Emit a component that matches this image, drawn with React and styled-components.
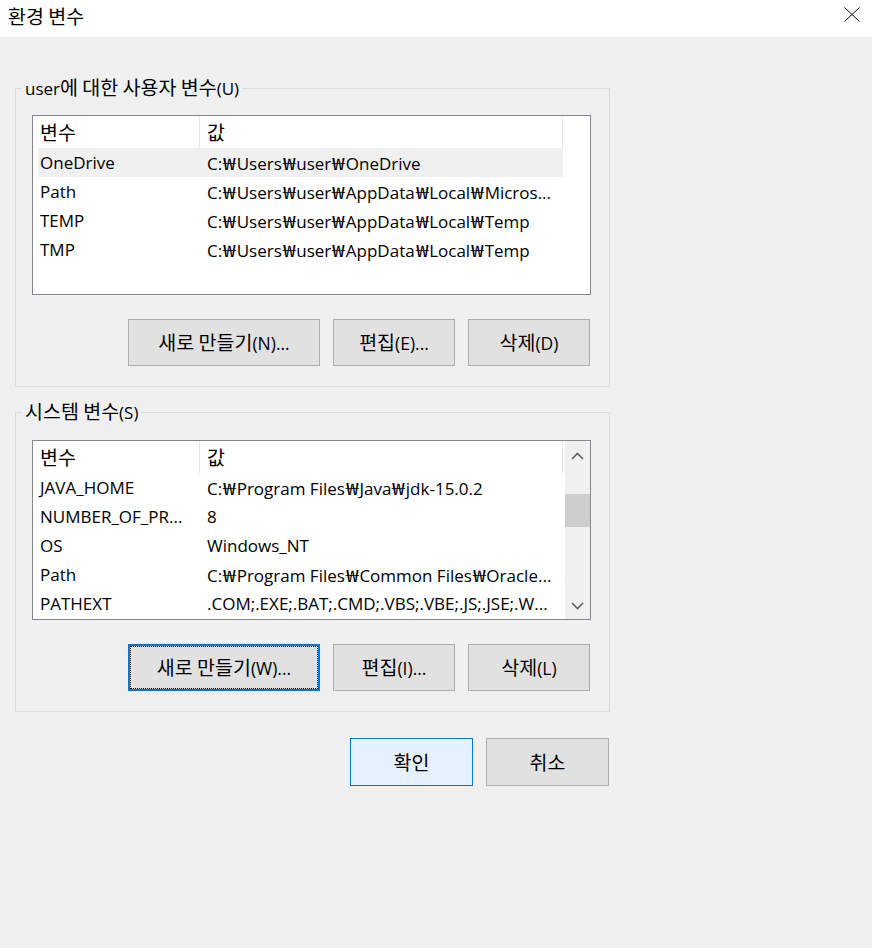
import styled, { createGlobalStyle, css } from "styled-components";

const GlobalStyle = createGlobalStyle`
  html, body {
    margin: 0;
    padding: 0;
  }
  body {
    background: #f0f0f0;
    font-family: "Open Sans", "Noto Sans CJK KR", sans-serif;
    font-size: 17px;
    color: #000;
  }
`;

const Window = styled.div`
  width: 872px;
  min-height: 948px;
  background: #f0f0f0;
  display: flex;
  flex-direction: column;
`;

const TitleBar = styled.div`
  height: 37px;
  background: #fff;
  display: flex;
  align-items: flex-start;
  justify-content: space-between;
`;

const Title = styled.div`
  padding: 6px 0 0 8px;
  height: 20px;
  line-height: 20px;
`;

const CloseButton = styled.div`
  width: 40px;
  height: 28px;
  display: flex;
  align-items: center;
  justify-content: center;
`;

// hangul runs are set a little larger, like Malgun Gothic next to Segoe
const Ko = styled.span`
  font-family: "Noto Sans CJK KR", sans-serif;
  font-size: 19.5px;
  line-height: 1;
`;

const Won = styled.span`
  display: inline-block;
  width: 14.5px;
  text-align: center;
  transform: scaleX(1.35);
`;

const Body = styled.div`
  padding: 40px 0 0 15px;
  display: flex;
  flex-direction: column;
`;

const Group = styled.fieldset`
  margin: ${(p) => p.$top}px 0 0;
  padding: ${(p) => p.$padTop}px 18px 20px 16px;
  border: 1px solid #dcdcdc;
  width: 595px;
  box-sizing: border-box;
  min-width: 0;
`;

const Legend = styled.legend`
  margin-left: -10px;
  padding: 0 3px;
  height: 22px;
  line-height: 22px;
  font-size: 17px;
  white-space: nowrap;
`;

const ListBox = styled.div`
  height: 180px;
  box-sizing: border-box;
  border: 1px solid #828790;
  background: #fff;
  display: flex;
  overflow: hidden;
`;

const ListMain = styled.div`
  width: 530px;
  flex: none;
  display: flex;
  flex-direction: column;
`;

const Header = styled.div`
  display: grid;
  grid-template-columns: 167px 1fr;
  height: 32px;
  flex: none;
`;

const HeaderCell = styled.div`
  padding-left: 7px;
  border-right: 1px solid #e5e5e5;
  display: flex;
  align-items: center;
`;

const Row = styled.div`
  margin-left: 5px;
  height: 29px;
  flex: none;
  display: grid;
  grid-template-columns: 161px 1fr;
  align-items: center;
  background: ${(p) => (p.$selected ? "#f0f0f0" : "transparent")};
`;

const Cell = styled.div`
  padding-left: ${(p) => (p.$first ? 2 : 8)}px;
  white-space: nowrap;
  overflow: hidden;
`;

const ScrollBar = styled.div`
  width: 25px;
  margin-left: 2px;
  background: #f0f0f0;
  display: flex;
  flex-direction: column;
`;

const ArrowButton = styled.div`
  height: ${(p) => p.$h}px;
  flex: none;
  display: flex;
  align-items: center;
  justify-content: center;
`;

const Track = styled.div`
  flex: 1;
  padding-top: 23px;
`;

const Thumb = styled.div`
  height: 33px;
  background: #cdcdcd;
`;

const ButtonRow = styled.div`
  display: flex;
  justify-content: flex-end;
  gap: 13px;
  margin-top: ${(p) => p.$top}px;
  padding-right: 1px;
  width: ${(p) => (p.$w ? `${p.$w}px` : "auto")};
  box-sizing: border-box;
`;

const Button = styled.button`
  width: ${(p) => p.$w}px;
  height: ${(p) => p.$h || 47}px;
  padding: 0;
  font: inherit;
  font-size: 17.5px;
  line-height: 20px;
  color: #000;
  background: #e1e1e1;
  border: 1px solid #adadad;
  box-sizing: border-box;
  ${(p) =>
    p.$focused &&
    css`
      border: 2px solid #0078d7;
      outline: 1px dotted #000;
      outline-offset: -3px;
    `}
  ${(p) =>
    p.$default &&
    css`
      background: #e5f1fb;
      border-color: #0078d7;
    `}
`;

function T({ children }) {
  const parts = String(children).split(/([가-힣]+(?: [가-힣]+)*|₩)/);
  return parts.map((part, i) => {
    if (!part) return null;
    if (part === "₩") return <Won key={i}>₩</Won>;
    if (/[가-힣]/.test(part)) return <Ko key={i}>{part}</Ko>;
    return part;
  });
}

const userVars = [
  ["OneDrive", "C:₩Users₩user₩OneDrive"],
  ["Path", "C:₩Users₩user₩AppData₩Local₩Micros..."],
  ["TEMP", "C:₩Users₩user₩AppData₩Local₩Temp"],
  ["TMP", "C:₩Users₩user₩AppData₩Local₩Temp"],
];

const systemVars = [
  ["JAVA_HOME", "C:₩Program Files₩Java₩jdk-15.0.2"],
  ["NUMBER_OF_PR...", "8"],
  ["OS", "Windows_NT"],
  ["Path", "C:₩Program Files₩Common Files₩Oracle..."],
  ["PATHEXT", ".COM;.EXE;.BAT;.CMD;.VBS;.VBE;.JS;.JSE;.W..."],
];

function Chevron({ up }) {
  return (
    <svg width="13" height="8" viewBox="0 0 13 8">
      <polyline
        points={up ? "1,7 6.5,1.5 12,7" : "1,1 6.5,6.5 12,1"}
        fill="none"
        stroke="#606060"
        strokeWidth="1.6"
      />
    </svg>
  );
}

function VarList({ rows, selected, scroll }) {
  return (
    <ListBox>
      <ListMain>
        <Header>
          <HeaderCell><T>변수</T></HeaderCell>
          <HeaderCell><T>값</T></HeaderCell>
        </Header>
        {rows.map(([name, value], i) => (
          <Row key={name + i} $selected={i === selected}>
            <Cell $first>{name}</Cell>
            <Cell><T>{value}</T></Cell>
          </Row>
        ))}
      </ListMain>
      {scroll && (
        <ScrollBar>
          <ArrowButton $h={30}>
            <Chevron up />
          </ArrowButton>
          <Track>
            <Thumb />
          </Track>
          <ArrowButton $h={26}>
            <Chevron />
          </ArrowButton>
        </ScrollBar>
      )}
    </ListBox>
  );
}

export default function App() {
  return (
    <Window>
      <GlobalStyle />
      <TitleBar>
        <Title><T>환경 변수</T></Title>
        <CloseButton>
          <svg width="16" height="15" viewBox="0 0 16 15">
            <path d="M0.5 0.5 L15.5 14.5 M15.5 0.5 L0.5 14.5" stroke="#000" strokeWidth="1" />
          </svg>
        </CloseButton>
      </TitleBar>
      <Body>
        <Group $top={0} $padTop={16}>
          <Legend>user<T>에 대한 사용자 변수</T>(U)</Legend>
          <VarList rows={userVars} selected={0} />
          <ButtonRow $top={24}>
            <Button $w={192}><T>새로 만들기</T>(N)...</Button>
            <Button $w={122}><T>편집</T>(E)...</Button>
            <Button $w={122}><T>삭제</T>(D)</Button>
          </ButtonRow>
        </Group>
        <Group $top={14} $padTop={17}>
          <Legend><T>시스템 변수</T>(S)</Legend>
          <VarList rows={systemVars} scroll />
          <ButtonRow $top={24}>
            <Button $w={192} $focused>
              <T>새로 만들기</T>(W)...
            </Button>
            <Button $w={122}><T>편집</T>(I)...</Button>
            <Button $w={122}><T>삭제</T>(L)</Button>
          </ButtonRow>
        </Group>
        <ButtonRow $top={26} $w={595}>
          <Button $w={123} $h={48} $default>
            <T>확인</T>
          </Button>
          <Button $w={123} $h={48}>
            <T>취소</T>
          </Button>
        </ButtonRow>
      </Body>
    </Window>
  );
}
